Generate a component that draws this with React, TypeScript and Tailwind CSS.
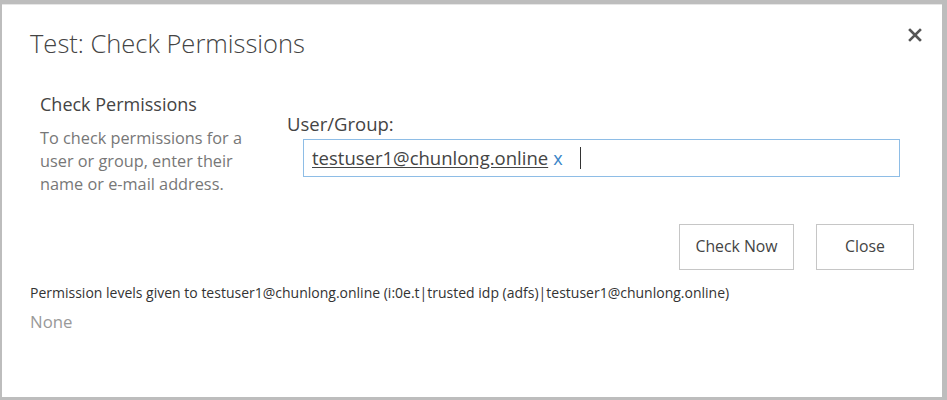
export default function App() {
  const font = { fontFamily: '"Open Sans", "Noto Sans", sans-serif' };
  return (
    <div
      className="w-[947px] h-[400px] bg-[#bdbdbd] pt-[4px] pl-[2px] pr-[5px] pb-[3px]"
      style={font}
    >
      <div className="relative h-full w-full bg-white border-t border-[#e6e6e6] flex flex-col">
        {/* Header */}
        <div className="flex items-start justify-between pl-[28px] pr-[20px] pt-[22px]">
          <h1 className="text-[25.5px] leading-[32px] font-light text-[#444]">
            Test: Check Permissions
          </h1>
          <button className="mt-[1px] text-[#555]">
            <svg width="14" height="14" viewBox="0 0 14 14">
              <path d="M2 2 L12 12 M12 2 L2 12" stroke="#555" strokeWidth="2.6" strokeLinecap="square" />
            </svg>
          </button>
        </div>

        {/* Body */}
        <div className="flex pt-[33px]">
          <div className="w-[285px] pl-[38px] pr-[30px]">
            <div className="text-[18px] leading-[24px] text-[#444]">Check Permissions</div>
            <p className="mt-[11px] text-[16.3px] leading-[23px] text-[#777]">
              To check permissions for a user or group, enter their name or e-mail address.
            </p>
          </div>
          <div className="flex-1 pt-[20px]">
            <div className="text-[18.5px] leading-[24px] text-[#444]">User/Group:</div>
            <div className="mt-[3px] ml-[16px] w-[597px] h-[38px] border border-[#8ebde6] flex items-center pl-[8px]">
              <span className="text-[18.5px] text-[#444] underline underline-offset-2">
                testuser1@chunlong.online
              </span>
              <span className="ml-[5px] text-[18px] text-[#3b86c8]">x</span>
              <span className="ml-[17px] w-px h-[22px] bg-[#333]" />
            </div>
          </div>
        </div>

        {/* Buttons */}
        <div className="flex justify-end gap-[22px] pr-[28px] mt-[28px]">
          <button className="w-[115px] h-[46px] border border-[#c6c6c6] text-[15.8px] text-[#444]">
            Check Now
          </button>
          <button className="w-[98px] h-[46px] border border-[#c6c6c6] text-[15.8px] text-[#444]">
            Close
          </button>
        </div>

        {/* Result */}
        <div className="pl-[28px] mt-[13px]">
          <div className="text-[14px] leading-[20px] text-[#333]">
            Permission levels given to testuser1@chunlong.online (i:0e.t|trusted idp (adfs)|testuser1@chunlong.online)
          </div>
          <div className="mt-[7px] text-[16.8px] leading-[24px] text-[#999]">None</div>
        </div>
      </div>
    </div>
  );
}
